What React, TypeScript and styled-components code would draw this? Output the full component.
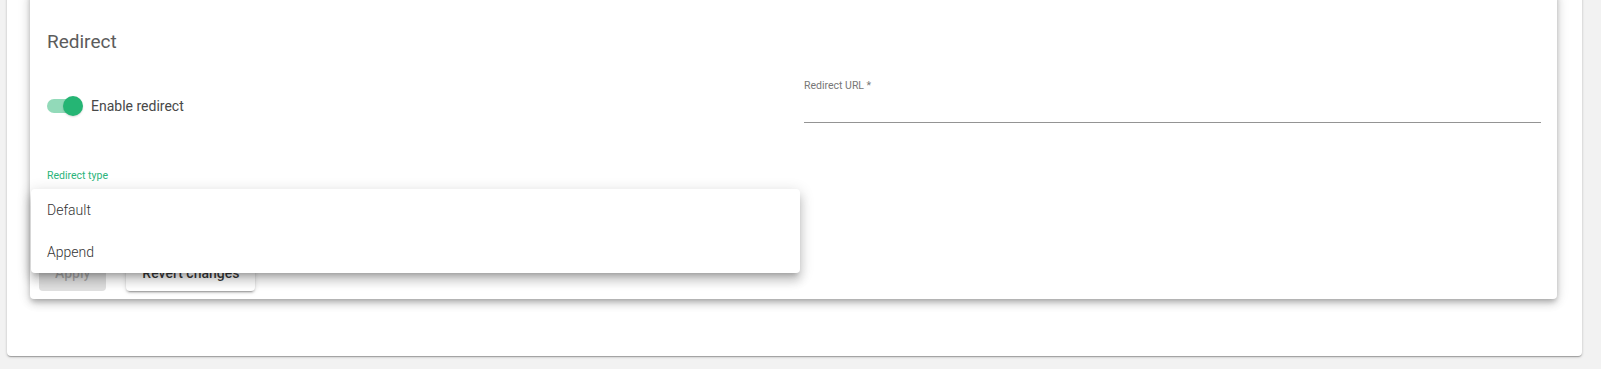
import React from "react";
import styled, { createGlobalStyle } from "styled-components";

const GREEN = "#25b574";

const GlobalStyle = createGlobalStyle`
  html, body {
    margin: 0;
    padding: 0;
    background: #f2f2f2;
    font-family: Roboto, "Liberation Sans", Arial, sans-serif;
    overflow: hidden;
    height: 369px;
  }
  * {
    box-sizing: border-box;
  }
`;

export default function App() {
  return (
    <>
      <GlobalStyle />
      <SOuterCard>
        <SInnerCard>
          <SContent>
            <STitle>Redirect</STitle>
            <SFormGrid>
              <SSwitchLabel>
                <SSwitch $checked>
                  <SSwitchTrack $checked />
                  <SSwitchThumb $checked />
                </SSwitch>
                <span>Enable redirect</span>
              </SSwitchLabel>
              <SField>
                <SFieldLabel>Redirect URL *</SFieldLabel>
                <SInput />
              </SField>
              <SField>
                <SFieldLabel $focused>Redirect type</SFieldLabel>
                <SInput $focused />
                <SMenu>
                  <SMenuItem>Default</SMenuItem>
                  <SMenuItem>Append</SMenuItem>
                </SMenu>
              </SField>
            </SFormGrid>
          </SContent>
          <SActions>
            <SButton $disabled>Apply</SButton>
            <SButton>Revert changes</SButton>
          </SActions>
        </SInnerCard>
      </SOuterCard>
    </>
  );
}

const SOuterCard = styled.div`
  margin: -10px 19px 0 7px;
  padding: 0 25px 57px 23px;
  background: #fff;
  border-radius: 4px;
  box-shadow: 0px 1px 3px 0px rgba(0, 0, 0, 0.2),
    0px 1px 1px 0px rgba(0, 0, 0, 0.14), 0px 2px 1px -1px rgba(0, 0, 0, 0.12);
`;

const SInnerCard = styled.div`
  background: #fff;
  border-radius: 4px;
  box-shadow: 0px 3px 5px -1px rgba(0, 0, 0, 0.2),
    0px 5px 8px 0px rgba(0, 0, 0, 0.14), 0px 1px 14px 0px rgba(0, 0, 0, 0.12);
`;

const SContent = styled.div`
  padding: 40px 16px 0 17px;
`;

const STitle = styled.h2`
  margin: 0 0 26px;
  font-size: 19px;
  line-height: 24px;
  font-weight: 400;
  color: #5c5c5c;
`;

const SFormGrid = styled.div`
  display: grid;
  grid-template-columns: 1fr 1fr;
  column-gap: 20px;
  row-gap: 45px;
  align-items: start;
`;

const SSwitchLabel = styled.label`
  display: flex;
  align-items: center;
  gap: 10px;
  height: 38px;
  margin-top: 7px;
  font-size: 14px;
  color: #484848;
`;

const SSwitch = styled.span<{ $checked?: boolean }>`
  position: relative;
  display: inline-block;
  width: 34px;
  height: 20px;
`;

const SSwitchTrack = styled.span<{ $checked?: boolean }>`
  position: absolute;
  left: 0;
  top: 3px;
  width: 34px;
  height: 14px;
  border-radius: 7px;
  background: ${(p) => (p.$checked ? GREEN : "#000")};
  opacity: ${(p) => (p.$checked ? 0.5 : 0.38)};
`;

const SSwitchThumb = styled.span<{ $checked?: boolean }>`
  position: absolute;
  top: 0;
  left: ${(p) => (p.$checked ? "16px" : "-3px")};
  width: 20px;
  height: 20px;
  border-radius: 50%;
  background: ${(p) => (p.$checked ? GREEN : "#fafafa")};
  box-shadow: 0px 1px 2px 0px rgba(0, 0, 0, 0.15);
`;

const SField = styled.div`
  position: relative;
  display: flex;
  flex-direction: column;
`;

const SFieldLabel = styled.label<{ $focused?: boolean }>`
  font-size: 10.5px;
  line-height: 12px;
  color: ${(p) => (p.$focused ? "#2ab47a" : "#777")};
`;

const SInput = styled.div<{ $focused?: boolean }>`
  height: 31px;
  border-bottom: ${(p) => (p.$focused ? `2px solid ${GREEN}` : "1px solid #949494")};
`;

const SMenu = styled.ul`
  position: absolute;
  z-index: 10;
  top: 19px;
  left: -16px;
  width: calc(100% + 32px);
  margin: 0;
  padding: 0;
  list-style: none;
  background: #fff;
  border-radius: 4px;
  box-shadow: 0px 5px 5px -3px rgba(0, 0, 0, 0.2),
    0px 8px 10px 1px rgba(0, 0, 0, 0.14), 0px 3px 14px 2px rgba(0, 0, 0, 0.12);
`;

const SMenuItem = styled.li`
  display: flex;
  align-items: center;
  height: 42px;
  padding: 0 16px 1px;
  font-size: 14px;
  font-weight: 300;
  color: #333;
`;

const SActions = styled.div`
  display: flex;
  gap: 20px;
  margin-top: 34px;
  padding: 8px 9px;
`;

const SButton = styled.button<{ $disabled?: boolean }>`
  height: 36px;
  padding: 0 16px;
  border: none;
  border-radius: 4px;
  font-family: Roboto, "Liberation Sans", Arial, sans-serif;
  font-size: 14px;
  font-weight: 500;
  color: ${(p) => (p.$disabled ? "rgba(0, 0, 0, 0.26)" : "rgba(0, 0, 0, 0.78)")};
  background: ${(p) => (p.$disabled ? "#e0e0e0" : "#fff")};
  box-shadow: ${(p) =>
    p.$disabled
      ? "none"
      : "0px 3px 1px -2px rgba(0,0,0,0.2), 0px 2px 2px 0px rgba(0,0,0,0.14), 0px 1px 5px 0px rgba(0,0,0,0.12)"};
`;
